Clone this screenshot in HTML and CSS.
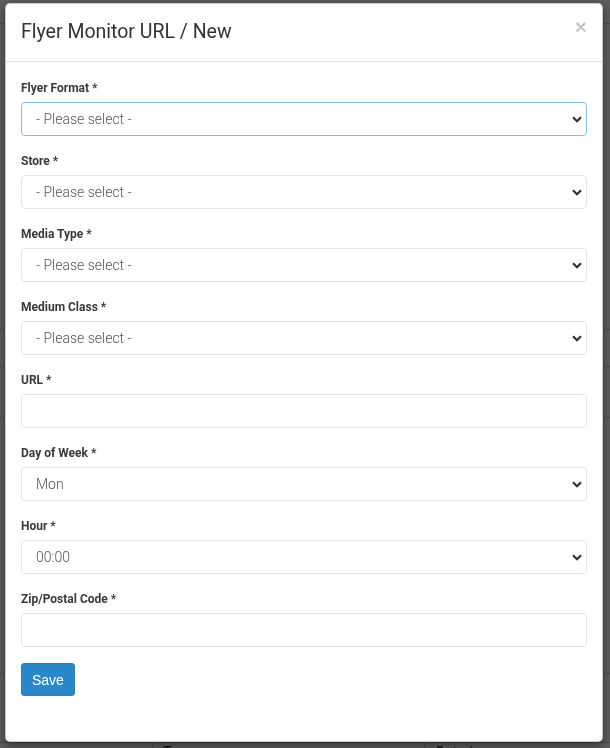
FILE: index.html
```html
<!DOCTYPE html>
<html lang="en">
<head>
    <meta charset="UTF-8">
    <meta name="viewport" content="width=device-width, initial-scale=1.0">
    <title>Flyer Monitor URL / New</title>
    <link rel="stylesheet" href="styles.css">
</head>
<body>
    <!-- Page underneath the modal -->
    <div class="page">
        <div class="page-row row-top"></div>
        <div class="page-row row-a"></div>
        <div class="page-row row-b"></div>
        <div class="page-row row-c"></div>
        <div class="page-row row-d"></div>
        <div class="page-row row-e"></div>
        <div class="page-row row-last">
            <div class="cell cell-first"></div>
            <div class="cell cell-mid">True</div>
            <div class="cell">Ontario</div>
        </div>
    </div>

    <!-- Modal -->
    <div class="backdrop">
        <div class="modal">
            <div class="modal-header">
                <h4 class="modal-title">Flyer Monitor URL / New</h4>
                <button type="button" class="close">&times;</button>
            </div>
            <div class="modal-body">
                <form id="flyerForm">
                    <div class="form-group">
                        <label>Flyer Format *</label>
                        <select class="form-control focused" name="format">
                            <option>- Please select -</option>
                        </select>
                    </div>
                    <div class="form-group">
                        <label>Store *</label>
                        <select class="form-control" name="store">
                            <option>- Please select -</option>
                        </select>
                    </div>
                    <div class="form-group">
                        <label>Media Type *</label>
                        <select class="form-control" name="media_type">
                            <option>- Please select -</option>
                        </select>
                    </div>
                    <div class="form-group">
                        <label>Medium Class *</label>
                        <select class="form-control" name="medium_class">
                            <option>- Please select -</option>
                        </select>
                    </div>
                    <div class="form-group">
                        <label>URL *</label>
                        <input type="text" class="form-control" name="url">
                    </div>
                    <div class="form-group">
                        <label>Day of Week *</label>
                        <select class="form-control" name="day">
                            <option>Mon</option>
                            <option>Tue</option>
                            <option>Wed</option>
                            <option>Thu</option>
                            <option>Fri</option>
                            <option>Sat</option>
                            <option>Sun</option>
                        </select>
                    </div>
                    <div class="form-group">
                        <label>Hour *</label>
                        <select class="form-control" name="hour">
                            <option>00:00</option>
                            <option>01:00</option>
                            <option>02:00</option>
                        </select>
                    </div>
                    <div class="form-group">
                        <label>Zip/Postal Code *</label>
                        <input type="text" class="form-control" name="zip">
                    </div>
                    <button type="submit" class="btn-save">Save</button>
                </form>
            </div>
        </div>
    </div>
</body>
</html>
```

FILE: styles.css
```css
* {
    box-sizing: border-box;
}

body {
    margin: 0;
    font-family: Roboto, "Helvetica Neue", Arial, sans-serif;
    color: #333;
    background-color: #f2f2f2;
}

/* page behind the backdrop */
.page {
    height: 748px;
    overflow: hidden;
}

.page-row {
    border-bottom: 1px solid #c4c4c4;
}

.row-top { height: 24px; }
.row-a { height: 306px; }
.row-b { height: 37px; }
.row-c { height: 51px; }
.row-d { height: 256px; }
.row-e { height: 69px; }

.row-last {
    display: flex;
    height: 40px;
    font-size: 14px;
    color: #222;
}

.cell {
    padding: 1px 10px;
}

.cell-first {
    width: 153px;
    border-right: 1px solid #c4c4c4;
}

.cell-mid {
    width: 272px;
    border-right: 1px solid #c4c4c4;
}

/* modal */
.backdrop {
    position: fixed;
    top: 0;
    left: 0;
    right: 0;
    bottom: 0;
    padding: 3px 0 0 5px;
    background-color: rgba(0, 0, 0, 0.62);
}

.modal {
    width: 598px;
    height: 739px;
    background: #fff;
    border: 1px solid rgba(0, 0, 0, 0.2);
    border-radius: 5px;
    box-shadow: 0 3px 9px rgba(0, 0, 0, 0.5);
}

.modal-header {
    display: flex;
    justify-content: space-between;
    align-items: flex-start;
    padding: 14px 15px 16px;
    border-bottom: 1px solid #e5e5e5;
}

.modal-title {
    margin: 0;
    font-size: 19.5px;
    font-weight: 400;
    line-height: 27px;
    color: #333;
}

.close {
    margin-top: -2px;
    padding: 0;
    background: none;
    border: none;
    font-family: "Liberation Sans", Arial, sans-serif;
    font-size: 21px;
    font-weight: bold;
    line-height: 1;
    color: #000;
    opacity: 0.22;
    cursor: pointer;
}

.modal-body {
    padding: 17px 15px 15px;
}

.form-group {
    margin-bottom: 16px;
}

label {
    display: block;
    margin-bottom: 4px;
    font-size: 12px;
    font-weight: 700;
    line-height: 19px;
    color: #3a3a3a;
}

.form-control {
    display: block;
    width: 100%;
    height: 34px;
    padding: 0 14px;
    font-family: Roboto, "Helvetica Neue", Arial, sans-serif;
    font-size: 14px;
    font-weight: 300;
    color: #555;
    background-color: #fff;
    border: 1px solid #e1e4e8;
    border-radius: 4px;
    outline: none;
}

select.form-control {
    appearance: none;
    -webkit-appearance: none;
    background-image: url("data:image/svg+xml;utf8,<svg xmlns='http://www.w3.org/2000/svg' width='10' height='7' viewBox='0 0 10 7'><polyline points='1,1.2 5,5.2 9,1.2' fill='none' stroke='%23333' stroke-width='2.2'/></svg>");
    background-repeat: no-repeat;
    background-position: right 4px center;
    background-size: 10px 7px;
}

.form-control.focused {
    border-color: #80bcea;
}

.btn-save {
    height: 33px;
    padding: 0 10px;
    font-family: "Liberation Sans", Arial, sans-serif;
    font-size: 14px;
    color: #fff;
    background-color: #2a88c9;
    border: 1px solid #2a80bf;
    border-radius: 3px;
    cursor: pointer;
}

.btn-save:hover {
    background-color: #23719f;
}
```
